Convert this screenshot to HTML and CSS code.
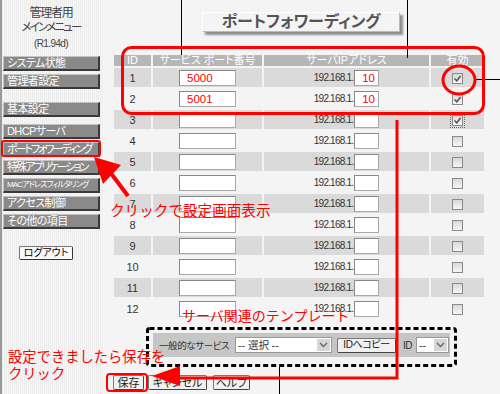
FILE: index.html
```html
<!DOCTYPE html>
<html lang="ja">
<head>
  <meta charset="UTF-8" />
  <meta name="viewport" content="width=device-width, initial-scale=1.0"/>
  <title>ポートフォワーディング</title>
  <link rel="stylesheet" href="styles.css">
</head>
<body>
  <div class="page">
    <div class="sidebar">
      <div class="menu-head">
        <div>管理者用</div>
        <div class="kana">メインメニュー</div>
        <div class="version">(R1.94d)</div>
      </div>

      <div class="menu-group first">
        <a class="menu-btn" href="#">システム状態</a>
        <a class="menu-btn" href="#">管理者設定</a>
      </div>
      <div class="menu-group second">
        <a class="menu-btn" href="#">基本設定</a>
      </div>
      <div class="menu-group third">
        <a class="menu-btn" href="#">DHCPサーバ</a>
        <a class="menu-btn tight" href="#">ポートフォワーディング</a>
        <a class="menu-btn tight" href="#">特殊アプリケーション</a>
        <a class="menu-btn small" href="#">MACアドレスフィルタリング</a>
        <a class="menu-btn" href="#">アクセス制御</a>
        <a class="menu-btn" href="#">その他の項目</a>
      </div>

      <button class="logout">ログアウト</button>
    </div>

    <div class="main">
      <div class="title-wrap">
        <div class="title">ポートフォワーディング</div>
      </div>

      <table class="pf-table">
        <thead>
          <tr>
            <th class="col-id">ID</th>
            <th class="col-port">サービス ポート番号</th>
            <th class="col-ip">サーバIPアドレス</th>
            <th class="col-on">有効</th>
          </tr>
        </thead>
        <tbody id="pf-rows"></tbody>
      </table>

      <div class="template-bar">
        <span class="bar-label">一般的なサービス</span>
        <span class="select wide">
          <select><option>-- 選択 --</option></select>
          <span class="arrow"><svg width="9" height="6" viewBox="0 0 9 6"><path d="M1 1 L4.5 4.5 L8 1" fill="none" stroke="#666" stroke-width="1.4"/></svg></span>
        </span>
        <button class="btn copy">IDへコピー</button>
        <span class="id-label">ID</span>
        <span class="select narrow">
          <select><option>--</option></select>
          <span class="arrow"><svg width="9" height="6" viewBox="0 0 9 6"><path d="M1 1 L4.5 4.5 L8 1" fill="none" stroke="#666" stroke-width="1.4"/></svg></span>
        </span>
      </div>

      <div class="actions">
        <button class="btn save">保存</button>
        <button class="btn cancel">キャンセル</button>
        <button class="btn help">ヘルプ</button>
      </div>
    </div>
  </div>

  <!-- annotations drawn over the screenshot -->
  <svg class="notes" width="500" height="394" viewBox="0 0 500 394">
    <g stroke="#000" stroke-width="1" fill="none">
      <line x1="181.5" y1="0" x2="181.5" y2="55"/>
      <line x1="407.5" y1="0" x2="407.5" y2="58"/>
      <line x1="475" y1="79.5" x2="500" y2="79.5"/>
      <line x1="279.5" y1="367" x2="279.5" y2="394"/>
    </g>
    <rect x="147.5" y="328.5" width="308" height="37" rx="2" fill="none" stroke="#000" stroke-width="3" stroke-dasharray="5 3"/>
    <g stroke="#f00" fill="none" stroke-width="3">
      <rect x="122.5" y="47.5" width="361" height="66" rx="9"/>
      <ellipse cx="459" cy="80" rx="16" ry="14"/>
      <polyline points="397,120 397,378 178,378"/>
      <line x1="110" y1="172" x2="128" y2="196" stroke-width="4"/>
      <rect x="2" y="141" width="98" height="15" rx="2" stroke-width="2"/>
      <rect x="107" y="374" width="40" height="17" rx="3" stroke-width="2"/>
    </g>
    <g fill="#f00">
      <polygon points="152,376 180,366 180,386"/>
      <polygon points="94,157 121,165 103,184"/>
    </g>
  </svg>
  <div class="note note-click">クリックで設定画面表示</div>
  <div class="note note-template">サーバ関連のテンプレート</div>
  <div class="note note-save">設定できましたら保存を<br>クリック</div>

  <script>
    const rowsBody = document.getElementById('pf-rows');

    const entries = [
      { port: '5000', ip: '10', on: true },
      { port: '5001', ip: '10', on: true },
      { port: '', ip: '', on: true, focus: true }
    ];

    const checkMark = '<svg width="9" height="9" viewBox="0 0 9 9"><path d="M1.5 4.5 L3.8 6.8 L7.5 2" fill="none" stroke="#555" stroke-width="1.5"/></svg>';

    for (let i = 1; i <= 12; i++) {
      const entry = entries[i - 1] || { port: '', ip: '', on: false };
      const tr = document.createElement('tr');
      if (i % 2 === 1) tr.className = 'shade';

      const checkClass = 'check' + (entry.on ? ' on' : '') + (entry.focus ? ' focus' : '');

      tr.innerHTML = `
        <td class="col-id">${i}</td>
        <td class="col-port"><input class="port-input" type="text" value="${entry.port}" /></td>
        <td class="col-ip"><span class="ip-prefix">192.168.1.</span><input class="ip-input" type="text" value="${entry.ip}" /></td>
        <td class="col-on"><span class="${checkClass}">${entry.on ? checkMark : ''}</span></td>
      `;
      rowsBody.appendChild(tr);
    }
  </script>
</body>
</html>
```

FILE: styles.css
```css
body {
  margin: 0;
  width: 500px;
  height: 394px;
  overflow: hidden;
  position: relative;
  font-family: 'Liberation Sans', 'Noto Sans CJK JP', sans-serif;
  color: #333;
  background: #f4f4f4;
}

.page {
  display: flex;
  height: 394px;
}

/* Left menu */
.sidebar {
  width: 104px;
  box-sizing: border-box;
  border-left: 2px solid #9a9a9a;
  padding-left: 1px;
  background: repeating-linear-gradient(90deg, #ececec 0 1px, #f7f7f7 1px 2px);
}

.menu-head {
  padding: 6px 5px 0 0;
  text-align: center;
  font-size: 12px;
  line-height: 14px;
  letter-spacing: -1.2px;
  color: #444;
  font-feature-settings: "palt";
}

.menu-head .kana {
  font-size: 11.5px;
  letter-spacing: -1.8px;
}

.menu-head .version {
  margin-top: 4px;
  font-size: 10px;
  line-height: 12px;
  letter-spacing: -0.6px;
}

.menu-group {
  display: flex;
  flex-direction: column;
  gap: 3px;
}

.menu-group.first { margin-top: 6px; }
.menu-group.second { margin-top: 13px; }
.menu-group.third { margin-top: 7px; }

.menu-btn {
  display: block;
  width: 97px;
  height: 15px;
  box-sizing: border-box;
  padding-left: 3px;
  background: #8a8a8a;
  border-top: 1px solid #c4c4c4;
  border-left: 1px solid #c4c4c4;
  border-right: 2px solid #3a3a3a;
  border-bottom: 2px solid #3a3a3a;
  color: #fff;
  font-size: 11px;
  line-height: 12px;
  letter-spacing: -0.6px;
  text-decoration: none;
  white-space: nowrap;
  overflow: hidden;
  font-feature-settings: "palt";
}

.menu-btn.tight {
  letter-spacing: -2px;
}

.menu-btn.small {
  font-size: 8px;
  letter-spacing: -0.9px;
}

.logout {
  display: block;
  margin: 17px 0 0 16px;
  width: 54px;
  height: 14px;
  padding: 0;
  background: #f8f8f8;
  border: 1px solid #777;
  border-right-color: #333;
  border-bottom-color: #333;
  border-radius: 2px;
  font-family: inherit;
  font-size: 10px;
  line-height: 12px;
  color: #000;
  font-feature-settings: "palt";
}

/* Main panel */
.main {
  flex: 1;
  padding: 12px 0 0 8px;
}

.title-wrap {
  display: flex;
  justify-content: center;
  padding-right: 10px;
  margin-bottom: 21px;
}

.title {
  width: 198px;
  height: 20px;
  box-sizing: border-box;
  border: 1px solid #fff;
  border-right-color: #bbb;
  border-bottom-color: #bbb;
  box-shadow: 3px 3px 2px #8e8e8e;
  text-align: center;
  font-size: 16px;
  line-height: 18px;
  font-weight: bold;
  color: #555;
  font-feature-settings: "palt";
}

.pf-table {
  border-collapse: separate;
  border-spacing: 2px;
  width: 374px;
  table-layout: fixed;
}

.pf-table th {
  height: 11px;
  padding: 0;
  background: #b6b6b6;
  color: #fff;
  font-size: 11px;
  line-height: 11px;
  font-weight: normal;
  font-feature-settings: "palt";
}

.pf-table td {
  height: 19px;
  padding: 0;
  text-align: center;
  font-size: 11px;
  color: #333;
}

.pf-table tr.shade td {
  background: #dadada;
}

.col-id { width: 37px; }
.col-port { width: 109px; }
.col-ip { width: 165px; }
.col-on { width: 53px; }

.port-input,
.ip-input {
  height: 16px;
  box-sizing: border-box;
  padding: 0 0 0 7px;
  border: 1px solid #a8a8a8;
  border-top-color: #888;
  border-left-color: #888;
  background: #fff;
  color: #f00;
  font-family: 'Liberation Sans', sans-serif;
  font-size: 11.5px;
  vertical-align: middle;
}

.port-input { width: 57px; }
.ip-input { width: 25px; }

.ip-prefix {
  font-size: 10px;
  letter-spacing: -0.8px;
  margin-right: 1px;
  vertical-align: middle;
}

.check {
  display: inline-flex;
  align-items: center;
  justify-content: center;
  width: 11px;
  height: 11px;
  box-sizing: border-box;
  border: 1px solid #8a8a8a;
  background: linear-gradient(#d8d8d8, #f6f6f6);
  vertical-align: middle;
}

.check.focus {
  outline: 1px dotted #666;
  outline-offset: 1px;
}

/* Template bar */
.template-bar {
  display: flex;
  align-items: center;
  width: 297px;
  height: 24px;
  box-sizing: border-box;
  margin: 13px 0 0 41px;
  padding: 0 3px 0 6px;
  background: #c6c6c6;
  font-size: 10px;
  color: #333;
  white-space: nowrap;
  font-feature-settings: "palt";
}

.bar-label {
  flex: none;
  width: 72px;
  font-size: 9.5px;
  letter-spacing: -0.4px;
}

.id-label {
  margin: 0 4px 0 7px;
  font-size: 10px;
  letter-spacing: -0.5px;
}

.select {
  display: inline-flex;
  align-items: center;
  flex: none;
  height: 16px;
  box-sizing: border-box;
  border: 1px solid #999;
  background: #fff;
}

.select select {
  appearance: none;
  border: none;
  background: transparent;
  padding: 0 2px;
  width: 100%;
  min-width: 0;
  font-family: inherit;
  font-size: 10.5px;
  color: #333;
  flex: 1;
  outline: none;
}

.select.wide { width: 97px; margin-left: 4px; }
.select.narrow { width: 33px; }

.select .arrow {
  display: flex;
  align-items: center;
  justify-content: center;
  flex: none;
  width: 13px;
  height: 12px;
  margin-right: 1px;
  background: #d6d6d6;
}

.btn {
  height: 15px;
  padding: 0;
  flex: none;
  background: #f0f0f0;
  border: 1px solid #777;
  border-right-color: #444;
  border-bottom-color: #444;
  border-radius: 2px;
  font-family: inherit;
  font-size: 11px;
  line-height: 12px;
  color: #222;
  white-space: nowrap;
  font-feature-settings: "palt";
}

.btn.copy {
  width: 59px;
  margin-left: 5px;
  font-size: 10px;
  letter-spacing: -0.4px;
}

.actions {
  display: flex;
  gap: 4px;
  margin: 18px 0 0 1px;
}

.btn.save { width: 31px; }
.btn.cancel { width: 59px; }
.btn.help { width: 37px; margin-left: 2px; }

/* Annotation layer */
.notes {
  position: absolute;
  top: 0;
  left: 0;
  pointer-events: none;
}

.note {
  position: absolute;
  color: #f00;
  font-family: 'Noto Sans CJK JP', sans-serif;
  white-space: nowrap;
}

.note-click {
  left: 110px;
  top: 200px;
  font-size: 14.6px;
  line-height: 20px;
}

.note-template {
  left: 182px;
  top: 305px;
  font-size: 14px;
  line-height: 20px;
}

.note-save {
  left: 8px;
  top: 347px;
  font-size: 14.3px;
  line-height: 17px;
}
```
